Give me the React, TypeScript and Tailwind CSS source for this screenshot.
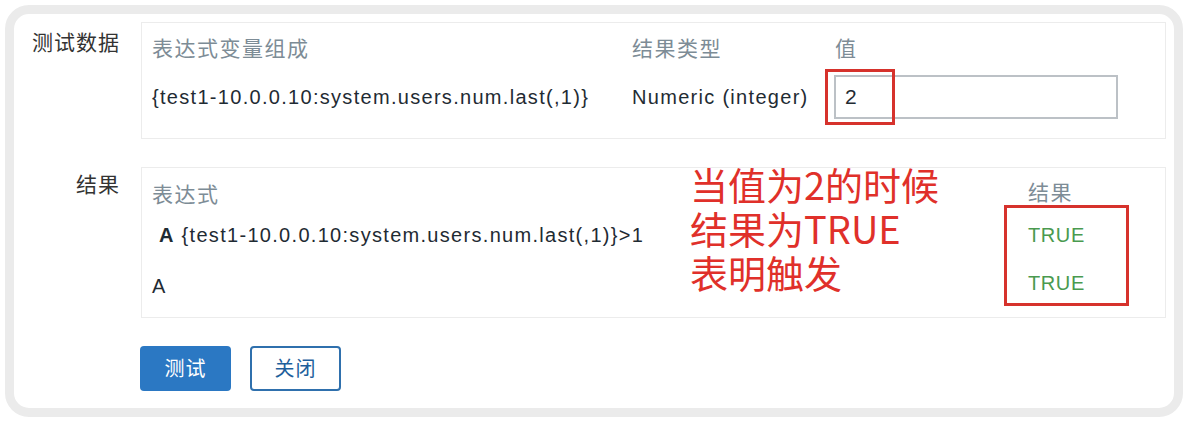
import React from 'react';

const font = { fontFamily: '"Liberation Sans", "Noto Sans CJK SC", sans-serif' };

export default function App() {
  return (
    <div className="w-[1188px] h-[422px] bg-white p-[5px]" style={font}>
      <div className="h-full rounded-[24px] border-[9px] border-[#ebebeb] bg-white pt-[8px] pr-[8px]">
        <div className="grid grid-cols-[106px_1fr] gap-x-[21px] gap-y-[28px]">
          {/* 测试数据 */}
          <div className="pt-[9px] h-[24px] leading-[24px] text-right text-[21px] tracking-[1px] text-[#333]">测试数据</div>
          <div className="h-[117px] border border-[#ececec] pl-[10px] pt-[14px]">
            <div className="grid grid-cols-[480px_202px_1fr] text-[21px] leading-[24px] tracking-[1.5px] text-[#7d8c96]">
              <div>表达式变量组成</div>
              <div>结果类型</div>
              <div className="pl-[1px]">值</div>
            </div>
            <div className="mt-[14px] grid grid-cols-[480px_202px_1fr] items-center text-[20px] tracking-[1.3px] text-[#1f2b33]">
              <div>{'{test1-10.0.0.10:system.users.num.last(,1)}'}</div>
              <div>Numeric (integer)</div>
              <div className="relative">
                <div className="w-[284px] h-[44px] border-2 border-[#bcc1c6] pl-[9px] flex items-center text-[21px]">2</div>
                <div className="absolute left-[-9px] top-[-6px] w-[70px] h-[56px] border-[3px] border-[#d6322c]" />
              </div>
            </div>
          </div>

          {/* 结果 */}
          <div className="pt-[6px] h-[24px] leading-[24px] text-right text-[21px] tracking-[1px] text-[#333]">结果</div>
          <div className="relative h-[151px] border border-[#ececec] pl-[10px] flex">
            <div className="flex-1 pt-[15px]">
              <div className="h-[24px] leading-[24px] text-[21px] tracking-[1.5px] text-[#7d8c96]">表达式</div>
              <div className="mt-[16px] h-[24px] leading-[24px] text-[20px] tracking-[1.3px] text-[#1f2b33] pl-[7px]">
                <span className="font-bold">A</span> {'{test1-10.0.0.10:system.users.num.last(,1)}>1'}
              </div>
              <div className="mt-[27px] h-[24px] leading-[24px] text-[20px] text-[#1f2b33]">A</div>
            </div>
            <div className="w-[137px] pt-[13px]">
              <div className="h-[24px] leading-[24px] text-[21px] tracking-[1.5px] text-[#7d8c96]">结果</div>
              <div className="mt-[18px] h-[24px] leading-[24px] text-[20px] tracking-[0.6px] text-[#4a9a4f]">TRUE</div>
              <div className="mt-[24px] h-[24px] leading-[24px] text-[20px] tracking-[0.6px] text-[#4a9a4f]">TRUE</div>
            </div>
            <div className="absolute left-[862px] top-[37px] w-[125px] h-[101px] border-[3px] border-[#d6322c]" />
            <div className="absolute left-[548px] top-[-6px] text-[38px] leading-[44px] text-[#e0302a]" style={{ fontFamily: '"Noto Sans CJK SC", "Liberation Sans", sans-serif' }}>
              <div>当值为2的时候</div>
              <div>结果为TRUE</div>
              <div>表明触发</div>
            </div>
          </div>

          {/* buttons */}
          <div />
          <div className="flex gap-[19px] -ml-[1px]">
            <button className="w-[91px] h-[45px] rounded-[4px] bg-[#2b78c3] text-white text-[20px] tracking-[1px]">测试</button>
            <button className="w-[91px] h-[45px] rounded-[4px] border-2 border-[#2f70ad] bg-white text-[#1e5f9c] text-[20px] tracking-[1px]">关闭</button>
          </div>
        </div>
      </div>
    </div>
  );
}
